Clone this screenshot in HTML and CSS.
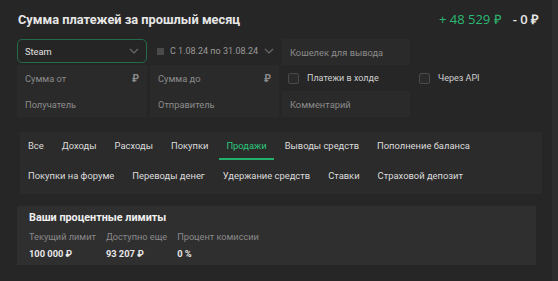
FILE: index.html
```html
<!DOCTYPE html>
<html lang="ru">
<head>
    <meta charset="UTF-8">
    <meta name="viewport" content="width=device-width, initial-scale=1.0">
    <title>Платежи</title>
    <link rel="stylesheet" href="styles.css">
</head>
<body>
    <div class="page">
        <div class="head">
            <h1>Сумма платежей за прошлый месяц</h1>
            <div class="totals">
                <span class="plus">+ 48 529 ₽</span>
                <span class="minus">- 0 ₽</span>
            </div>
        </div>

        <div class="filters">
            <div class="field select active">
                <span>Steam</span>
                <svg class="chev" width="10" height="6" viewBox="0 0 10 6"><path d="M1 1l4 4 4-4" fill="none" stroke="#6a6a6a" stroke-width="1.2"/></svg>
            </div>
            <div class="field date">
                <span class="cal"></span>
                <span>С 1.08.24 по 31.08.24</span>
                <svg class="chev" width="10" height="6" viewBox="0 0 10 6"><path d="M1 1l4 4 4-4" fill="none" stroke="#6a6a6a" stroke-width="1.2"/></svg>
            </div>
            <div class="field input">Кошелек для вывода</div>
            <div class="field blank"></div>

            <div class="field input">Сумма от <span class="rub">₽</span></div>
            <div class="field input">Сумма до <span class="rub">₽</span></div>
            <label class="field check"><span class="box"></span>Платежи в холде</label>
            <label class="field check"><span class="box"></span>Через API</label>

            <div class="field input">Получатель</div>
            <div class="field input">Отправитель</div>
            <div class="field input">Комментарий</div>
            <div class="field blank"></div>
        </div>

        <div class="tabs">
            <div class="tab-row">
                <a class="tab">Все</a>
                <a class="tab">Доходы</a>
                <a class="tab">Расходы</a>
                <a class="tab">Покупки</a>
                <a class="tab current">Продажи</a>
                <a class="tab">Выводы средств</a>
                <a class="tab">Пополнение баланса</a>
            </div>
            <div class="tab-row">
                <a class="tab">Покупки на форуме</a>
                <a class="tab">Переводы денег</a>
                <a class="tab">Удержание средств</a>
                <a class="tab">Ставки</a>
                <a class="tab">Страховой депозит</a>
            </div>
        </div>

        <div class="limits">
            <h2>Ваши процентные лимиты</h2>
            <div class="limit-cols">
                <div class="limit">
                    <div class="label">Текущий лимит</div>
                    <div class="value">100 000 ₽</div>
                </div>
                <div class="limit">
                    <div class="label">Доступно еще</div>
                    <div class="value">93 207 ₽</div>
                </div>
                <div class="limit">
                    <div class="label">Процент комиссии</div>
                    <div class="value">0 %</div>
                </div>
            </div>
        </div>
    </div>
    <div class="scroll"></div>
</body>
</html>
```

FILE: styles.css
```css
body {
    margin: 0;
    background: #262626;
    color: #d6d6d6;
    font-family: Roboto, "Open Sans", sans-serif;
    font-size: 9.3px;
}
.page {
    padding: 8px 15px 0 17px;
    width: 527px;
}
.head {
    display: flex;
    justify-content: space-between;
    align-items: center;
    height: 22px;
    margin-bottom: 9px;
}
h1 {
    margin: 0;
    font-size: 12.8px;
    font-weight: 700;
    color: #e6e6e6;
    padding-left: 1px;
}
.totals {
    display: flex;
    gap: 11px;
    font-size: 13px;
    font-family: "Open Sans", sans-serif;
    padding-right: 5px;
}
.plus { color: #2cb872; }
.minus { color: #e6e6e6; font-weight: 600; }

.filters {
    display: grid;
    grid-template-columns: 130px 129px 128px 128px;
    column-gap: 3px;
}
.field {
    height: 26px;
    display: flex;
    align-items: center;
    padding: 0 8px;
    box-sizing: border-box;
    color: #8c8c8c;
    background: #2a2a2a;
    white-space: nowrap;
}
.select {
    height: 24px;
    border: 1px solid #256b4b;
    border-radius: 5px;
    background: #252525;
    color: #e2e2e2;
    justify-content: space-between;
    padding: 0 7px;
    margin-bottom: 1px;
}
.date {
    background: #262626;
    color: #9a9a9a;
    gap: 6px;
    padding: 0 5px 0 7px;
    font-size: 9px;
    height: 24px;
}
.date .chev { margin-left: auto; }
.cal {
    width: 7px;
    height: 7px;
    background: #4a4a4a;
}
.input { justify-content: space-between; }
.rub { color: #8a8a8a; font-weight: 700; font-size: 10px; }
.blank { background: #262626; }
.check {
    background: #262626;
    color: #cfcfcf;
    gap: 8px;
    padding-left: 6px;
    font-size: 9px;
}
.box {
    width: 9px;
    height: 9px;
    border: 1px solid #4a4a4a;
    border-radius: 2px;
    background: #2b2b2b;
}

.tabs {
    margin: 15px 2px 0 3px;
    background: #2b2b2b;
    padding: 0 1px 2px;
}
.tab-row {
    display: flex;
    gap: 4px;
}
.tab {
    padding: 6.5px 7px;
    line-height: 13px;
    font-size: 9.4px;
    color: #dcdcdc;
    border-bottom: 2px solid transparent;
    margin-bottom: 2px;
}
.tab.current {
    color: #2cc77d;
    border-bottom-color: #22b06d;
}

.limits {
    margin-top: 12px;
    background: #2f2f2f;
    padding: 4.5px 12px 5px;
    width: 495px;
}
h2 {
    margin: 0 0 7.5px;
    line-height: 13px;
    font-size: 10.8px;
    font-weight: 700;
    color: #efefef;
}
.limit-cols {
    display: flex;
    gap: 10px;
}
.label { color: #8a8a8a; line-height: 12px; font-size: 9.2px; }
.value {
    margin-top: 5px;
    line-height: 12px;
    font-weight: 700;
    color: #e8e8e8;
}
.scroll {
    position: fixed;
    top: 0;
    right: 0;
    width: 6px;
    height: 100%;
    background: #2d2d2d;
}
```
